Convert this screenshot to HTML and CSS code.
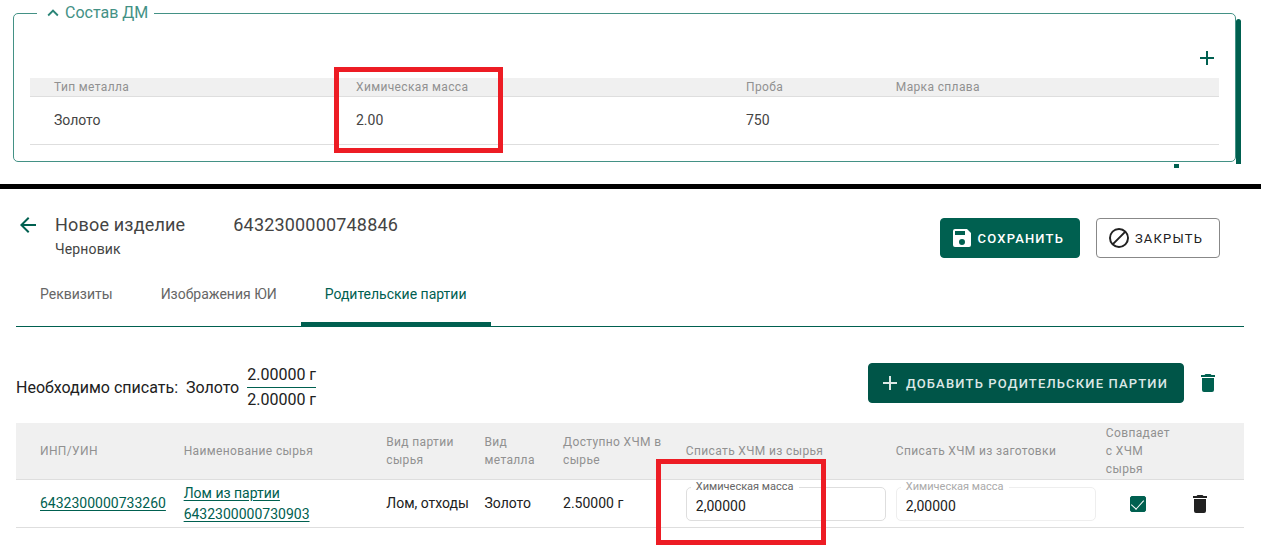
FILE: index.html
```html
<!DOCTYPE html>
<html lang="ru">
<head>
<meta charset="utf-8">
<title>Новое изделие</title>
<link rel="stylesheet" href="styles.css">
</head>
<body>
<section class="composition">
  <fieldset class="panel">
    <legend class="panel-legend">
      <button class="toggle" type="button">
        <svg class="chevron" viewBox="0 0 24 24" aria-hidden="true"><path d="M7.41 15.41 12 10.83l4.59 4.58L18 14l-6-6-6 6z"/></svg>
        Состав ДМ
      </button>
    </legend>
    <div class="panel-tools">
      <button class="icon-button" type="button" aria-label="Добавить">
        <svg class="icon" viewBox="0 0 24 24"><path d="M19 13h-6v6h-2v-6H5v-2h6V5h2v6h6z"/></svg>
      </button>
    </div>
    <table class="grid metals">
      <colgroup><col class="m-type"><col class="m-mass"><col class="m-fineness"><col></colgroup>
      <thead><tr><th>Тип металла</th><th>Химическая масса</th><th>Проба</th><th>Марка сплава</th></tr></thead>
      <tbody><tr><td>Золото</td><td class="marked">2.00<span class="mark mark-mass"></span></td><td>750</td><td></td></tr></tbody>
    </table>
  </fieldset>
  <div class="scroll-thumb"></div>
  <span class="scroll-stub"></span>
</section>

<main class="item">
  <header class="item-header">
    <button class="icon-button" type="button" aria-label="Назад">
      <svg class="icon" viewBox="0 0 24 24"><path d="M20 11H7.83l5.59-5.59L12 4l-8 8 8 8 1.41-1.41L7.83 13H20z"/></svg>
    </button>
    <div class="titles">
      <h1 class="title"><span>Новое изделие</span><span>6432300000748846</span></h1>
      <p class="status">Черновик</p>
    </div>
    <div class="actions">
      <button class="button button-filled" type="button">
        <svg class="icon" viewBox="0 0 24 24" aria-hidden="true"><path d="M17 3H5a2 2 0 0 0-2 2v14a2 2 0 0 0 2 2h14a2 2 0 0 0 2-2V7zm-5 16a3 3 0 1 1 0-6 3 3 0 0 1 0 6zm3-10H5V5h10z"/></svg>
        СОХРАНИТЬ
      </button>
      <button class="button button-outlined" type="button">
        <svg class="icon" viewBox="0 0 24 24" aria-hidden="true"><path d="M12 2a10 10 0 1 0 0 20 10 10 0 0 0 0-20zM4 12a8 8 0 0 1 12.9-6.31L5.69 16.9A7.9 7.9 0 0 1 4 12zm8 8a7.9 7.9 0 0 1-4.9-1.69L18.31 7.1A8 8 0 0 1 12 20z"/></svg>
        ЗАКРЫТЬ
      </button>
    </div>
  </header>

  <nav class="tabs">
    <a class="tab" href="#details">Реквизиты</a>
    <a class="tab" href="#images">Изображения ЮИ</a>
    <a class="tab tab-active" href="#lots" aria-current="page">Родительские партии</a>
  </nav>

  <div class="summary">
    <span>Необходимо списать:</span>
    <span>Золото</span>
    <span class="ratio"><span class="ratio-top">2.00000 г</span><span>2.00000 г</span></span>
    <div class="summary-actions">
      <button class="button button-filled button-add" type="button">
        <svg class="icon" viewBox="0 0 24 24" aria-hidden="true"><path d="M19 13h-6v6h-2v-6H5v-2h6V5h2v6h6z"/></svg>
        ДОБАВИТЬ РОДИТЕЛЬСКИЕ ПАРТИИ
      </button>
      <button class="icon-button" type="button" aria-label="Удалить все">
        <svg class="icon" viewBox="0 0 24 24"><path d="M6 19a2 2 0 0 0 2 2h8a2 2 0 0 0 2-2V7H6zM19 4h-3.5l-1-1h-5l-1 1H5v2h14z"/></svg>
      </button>
    </div>
  </div>

  <table class="grid lots">
    <colgroup><col class="l-id"><col class="l-name"><col class="l-kind"><col class="l-metal"><col class="l-available"><col class="l-raw"><col class="l-blank"><col class="l-match"><col></colgroup>
    <thead><tr>
      <th>ИНП/УИН</th><th>Наименование сырья</th><th>Вид партии<br>сырья</th><th>Вид<br>металла</th><th>Доступно ХЧМ в сырье</th><th>Списать ХЧМ из сырья</th><th>Списать ХЧМ из заготовки</th><th>Совпадает<br>с ХЧМ<br>сырья</th><th></th>
    </tr></thead>
    <tbody><tr>
      <td><a class="link" href="#lot">6432300000733260</a></td>
      <td><a class="link" href="#raw">Лом из партии 6432300000730903</a></td>
      <td>Лом, отходы</td>
      <td>Золото</td>
      <td>2.50000 г</td>
      <td class="marked">
        <div class="field"><label class="field-label" for="raw-mass">Химическая масса</label><input class="field-input" id="raw-mass" type="text" value="2,00000"></div>
        <span class="mark mark-input"></span>
      </td>
      <td>
        <div class="field field-disabled"><label class="field-label" for="blank-mass">Химическая масса</label><input class="field-input" id="blank-mass" type="text" value="2,00000" disabled></div>
      </td>
      <td class="match"><input class="checkbox" type="checkbox" checked aria-label="Совпадает с ХЧМ сырья"></td>
      <td class="last">
        <button class="icon-button icon-dark" type="button" aria-label="Удалить">
          <svg class="icon" viewBox="0 0 24 24"><path d="M6 19a2 2 0 0 0 2 2h8a2 2 0 0 0 2-2V7H6zM19 4h-3.5l-1-1h-5l-1 1H5v2h14z"/></svg>
        </button>
      </td>
    </tr></tbody>
  </table>
</main>
</body>
</html>
```
FILE: styles.css
```css
* { box-sizing: border-box; }

:root {
  --green: #006050;
  --green-soft: #439185;
  --text: #212121;
  --muted: #919191;
  --line: #dedede;
  --red: #ed1c24;
}

body {
  margin: 0;
  background: #fff;
  color: var(--text);
  font: 14px/21px Roboto, "Liberation Sans", sans-serif;
}

button { font: inherit; cursor: pointer; }

.icon {
  display: block;
  flex: none;
  width: 24px;
  height: 24px;
  fill: currentColor;
}

.icon-button {
  display: block;
  padding: 0;
  border: 0;
  background: none;
  color: var(--green);
}

.icon-dark { color: var(--text); }

/* Composition panel */

.composition {
  position: relative;
  display: flex;
  align-items: stretch;
  padding: 2px 20px 20px 13px;
  border-bottom: 5px solid #000;
}

.panel {
  flex: 1;
  min-width: 0;
  margin: 0 0 2px;
  padding: 0 16px 16px;
  border: 1px solid var(--green-soft);
  border-radius: 5px;
}

.panel-legend {
  margin-left: 7px;
  padding: 0 6px 0 5px;
}

.toggle {
  display: flex;
  align-items: center;
  gap: 1px;
  padding: 0;
  border: 0;
  background: none;
  color: var(--green-soft);
  font-size: 16px;
  line-height: 20px;
}

.chevron {
  width: 22px;
  height: 22px;
  fill: #2b8577;
}

.panel-tools {
  display: flex;
  justify-content: flex-end;
  padding: 22px 0 8px;
}

.scroll-thumb {
  width: 5px;
  margin-top: 17px;
  border-radius: 3px 3px 0 0;
  background: var(--green);
}

.scroll-stub {
  position: absolute;
  right: 82px;
  bottom: 16px;
  width: 5px;
  height: 4px;
  background: var(--green);
}

/* Tables */

.grid {
  width: 100%;
  border-collapse: separate;
  border-spacing: 0;
  table-layout: fixed;
}

.grid th {
  padding: 0 8px;
  border-bottom: 1px solid var(--line);
  background: #f0f0f0;
  color: var(--muted);
  font-size: 12px;
  font-weight: 400;
  line-height: 18px;
  letter-spacing: 0.03em;
  text-align: left;
}

.grid td {
  height: 48px;
  padding: 0 0 0 8px;
  border-bottom: 1px solid var(--line);
}

.metals th, .metals td { padding-left: 24px; }
.metals { color: #444; }
.m-type { width: 25.4%; }
.m-mass { width: 32.8%; }
.m-fineness { width: 12.6%; }

.lots th { padding-block: 1px; }
.lots th:first-child, .lots td:first-child { padding-left: 24px; }
.lots .match { padding-left: 32px; }
.lots .last { padding-left: 3px; }
.l-id { width: 13%; }
.l-name { width: 16.5%; }
.l-kind { width: 8%; }
.l-metal { width: 6.4%; }
.l-available { width: 10%; }
.l-raw { width: 17.1%; }
.l-blank { width: 17.1%; }
.l-match { width: 7.1%; }

.link { color: var(--green); text-underline-offset: 2px; }

/* Callout frames laid over the cells */

.marked { position: relative; }

.mark {
  position: absolute;
  z-index: 1;
  border: 5px solid var(--red);
  pointer-events: none;
}

.mark-mass { top: -30px; left: 2px; width: 169px; height: 86px; }
.mark-input { top: -21px; left: -22px; width: 170px; height: 86px; }

/* Item */

.item { padding: 24px 17px 24px 16px; }

.item-header {
  display: flex;
  align-items: flex-start;
  gap: 15px;
  padding-right: 24px;
}

.titles { flex: 1; color: #444; }

.title {
  display: flex;
  gap: 48px;
  margin: 0;
  font-size: 18px;
  font-weight: 400;
  line-height: 24px;
  letter-spacing: 0.01em;
}

.status { margin: 0; line-height: 24px; letter-spacing: 0.01em; }

.actions { display: flex; gap: 16px; padding-top: 5px; }

.button {
  display: flex;
  align-items: center;
  gap: 4px;
  height: 40px;
  padding: 0 15px 0 9px;
  border: 1px solid var(--green);
  border-radius: 4px;
  font-size: 13px;
  letter-spacing: 0.09em;
  white-space: nowrap;
}

.button-filled { background: var(--green); color: #fff; font-weight: 500; }
.button-outlined { padding: 0 16px 0 10px; border-color: #888; background: #fff; color: var(--text); }
.button-add { border-color: #005548; background: #005548; color: #dce8e6; }

.tabs {
  display: flex;
  border-bottom: 1px solid var(--green);
}

.tab {
  margin-bottom: -1px;
  padding: 5px 24px 0;
  border-bottom: 5px solid transparent;
  color: #666;
  line-height: 56px;
  text-decoration: none;
}

.tab-active { border-color: var(--green); color: var(--green); }

.summary {
  display: flex;
  align-items: center;
  gap: 8px;
  padding: 36px 24px 11px 0;
  font-size: 16px;
}

.ratio { display: grid; line-height: 24px; }
.ratio-top { border-bottom: 1px solid var(--green); }

.summary-actions {
  display: flex;
  align-items: center;
  align-self: flex-start;
  gap: 12px;
  margin-left: auto;
}

.field { position: relative; width: 100%; max-width: 200px; }

.field-label {
  position: absolute;
  top: -7px;
  left: 5px;
  padding: 0 5px;
  background: #fff;
  color: #666;
  font-size: 11px;
  line-height: 14px;
}

.field-input {
  display: block;
  width: 100%;
  height: 34px;
  padding: 4px 9px 0;
  border: 1px solid var(--line);
  border-radius: 5px;
  background: #fff;
  color: var(--text);
  font: inherit;
}

.field-disabled .field-label { color: #aaa; }
.field-disabled .field-input { border-color: #eee; }

.checkbox {
  display: grid;
  place-items: center;
  width: 16px;
  height: 16px;
  margin: 0;
  appearance: none;
  border: 1px solid var(--green);
  border-radius: 2px;
}

.checkbox:checked { background: var(--green); }

.checkbox:checked::after {
  content: "";
  width: 6px;
  height: 11px;
  margin-bottom: 3px;
  border: solid #fff;
  border-width: 0 1px 1px 0;
  transform: rotate(42deg);
}
```
